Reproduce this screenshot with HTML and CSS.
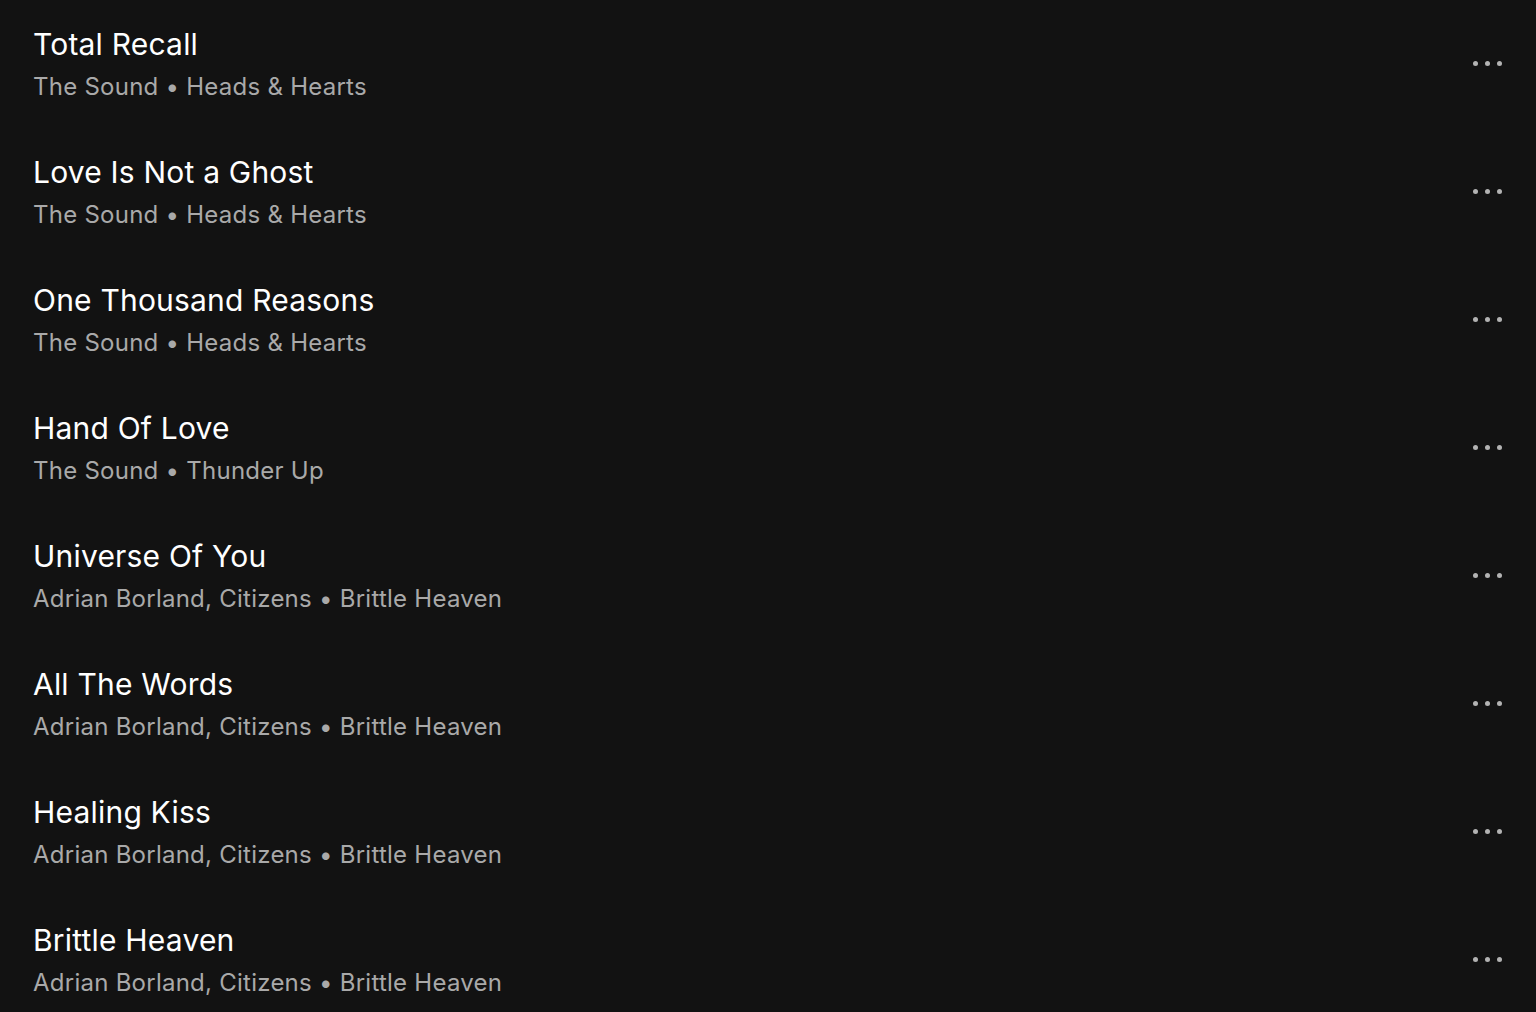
FILE: index.html
```html
<!DOCTYPE html>
<html>
<head>
<meta charset="utf-8">
<link rel="stylesheet" href="styles.css">
</head>
<body>
<ul class="tracks">
  <li class="track"><div class="info"><div class="title">Total Recall</div><div class="sub">The Sound • Heads &amp; Hearts</div></div><button class="more" aria-label="More"><span></span><span></span><span></span></button></li>
  <li class="track"><div class="info"><div class="title">Love Is Not a Ghost</div><div class="sub">The Sound • Heads &amp; Hearts</div></div><button class="more" aria-label="More"><span></span><span></span><span></span></button></li>
  <li class="track"><div class="info"><div class="title">One Thousand Reasons</div><div class="sub">The Sound • Heads &amp; Hearts</div></div><button class="more" aria-label="More"><span></span><span></span><span></span></button></li>
  <li class="track"><div class="info"><div class="title">Hand Of Love</div><div class="sub">The Sound • Thunder Up</div></div><button class="more" aria-label="More"><span></span><span></span><span></span></button></li>
  <li class="track"><div class="info"><div class="title">Universe Of You</div><div class="sub">Adrian Borland, Citizens • Brittle Heaven</div></div><button class="more" aria-label="More"><span></span><span></span><span></span></button></li>
  <li class="track"><div class="info"><div class="title">All The Words</div><div class="sub">Adrian Borland, Citizens • Brittle Heaven</div></div><button class="more" aria-label="More"><span></span><span></span><span></span></button></li>
  <li class="track"><div class="info"><div class="title">Healing Kiss</div><div class="sub">Adrian Borland, Citizens • Brittle Heaven</div></div><button class="more" aria-label="More"><span></span><span></span><span></span></button></li>
  <li class="track"><div class="info"><div class="title">Brittle Heaven</div><div class="sub">Adrian Borland, Citizens • Brittle Heaven</div></div><button class="more" aria-label="More"><span></span><span></span><span></span></button></li>
</ul>
</body>
</html>
```
FILE: styles.css
```css
html, body {
  margin: 0;
  padding: 0;
  background: #121212;
  height: 100%;
  overflow: hidden;
}
body {
  font-family: Inter, Lato, "Liberation Sans", sans-serif;
}
.tracks {
  list-style: none;
  margin: 0;
  padding: 0;
}
.track {
  height: 128px;
  display: flex;
  align-items: center;
  justify-content: space-between;
  padding: 0 34px 0 33px;
  box-sizing: border-box;
}
.info {
  display: flex;
  flex-direction: column;
  gap: 10px;
}
.title {
  color: #ffffff;
  font-size: 30px;
  line-height: 36px;
  letter-spacing: 0.2px;
}
.sub {
  color: #a9a9a9;
  font-size: 24px;
  line-height: 30px;
  letter-spacing: 0.25px;
}
.more {
  background: none;
  border: 0;
  padding: 0;
  display: flex;
  gap: 7px;
  align-items: center;
  margin-top: -2px;
}
.more span {
  width: 5px;
  height: 5px;
  border-radius: 50%;
  background: #b3b3b3;
}
```
